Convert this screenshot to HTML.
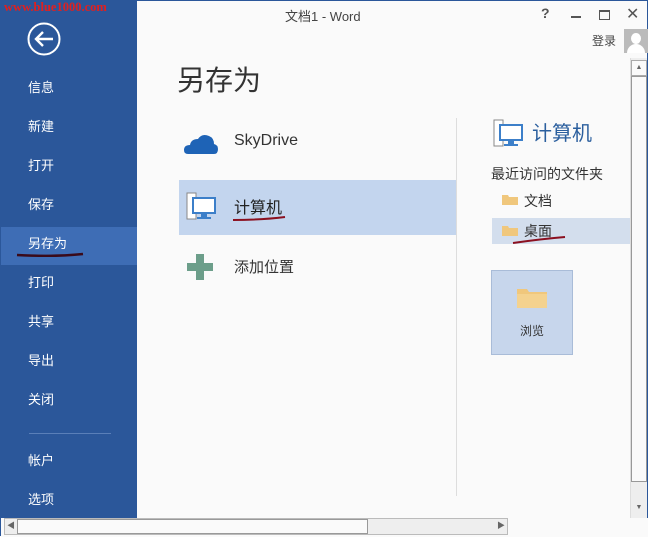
<!DOCTYPE html>
<html><head><meta charset="utf-8"><style>
*{margin:0;padding:0;box-sizing:border-box}
body{width:648px;height:536px;overflow:hidden;background:#fafafa;font-family:"Liberation Sans","Noto Sans CJK SC",sans-serif;position:relative;border:1px solid #2b579a}
.a{position:absolute}
.side{left:0;top:0;width:136px;height:517px;background:#2b579a}
.nav{position:absolute;left:27px;color:#fff;font-size:13px;line-height:16px}
.t{color:#444}
</style></head><body>
<div class="a side"></div>
<div class="a" style="left:3px;top:-1px;font-family:'Liberation Serif',serif;font-weight:bold;color:#e02020;font-size:12.5px;letter-spacing:0px">www.blue1000.com</div>
<svg class="a" style="left:25px;top:20px" width="36" height="36"><circle cx="18" cy="18" r="15.5" fill="none" stroke="#fff" stroke-width="2"/><path d="M10 18H27M17 11L10 18L17 25" fill="none" stroke="#fff" stroke-width="2.4"/></svg>
<div class="a" style="left:0;top:226px;width:136px;height:38px;background:#3e6db5"></div>
<div class="nav" style="top:79px">信息</div>
<div class="nav" style="top:118px">新建</div>
<div class="nav" style="top:157px">打开</div>
<div class="nav" style="top:196px">保存</div>
<div class="nav" style="top:235px">另存为</div>
<svg class="a" style="left:14px;top:250px" width="70" height="8"><path d="M2 4Q40 6 68 3" stroke="#3a0a1a" stroke-width="2.4" fill="none"/></svg>
<div class="nav" style="top:274px">打印</div>
<div class="nav" style="top:313px">共享</div>
<div class="nav" style="top:352px">导出</div>
<div class="nav" style="top:391px">关闭</div>
<div class="a" style="left:28px;top:432px;width:82px;height:1px;background:#5a7fb8"></div>
<div class="nav" style="top:452px">帐户</div>
<div class="nav" style="top:491px">选项</div>

<div class="a t" style="left:284px;top:5px;font-size:13px">文档1 - Word</div>
<div class="a" style="left:540px;top:4px;font-size:14px;color:#555;font-weight:bold">?</div>
<div class="a" style="left:570px;top:15px;width:10px;height:2px;background:#555"></div>
<div class="a" style="left:598px;top:9px;width:11px;height:10px;border:1px solid #555;border-top-width:2px"></div>
<div class="a" style="left:625px;top:3px;font-size:16px;color:#555">✕</div>
<div class="a t" style="left:591px;top:31px;font-size:12px">登录</div>
<div class="a" style="left:623px;top:28px;width:24px;height:24px;background:#bbb;overflow:hidden"><div class="a" style="left:7px;top:4px;width:10px;height:11px;border-radius:50%;background:#fff"></div><div class="a" style="left:3px;top:15px;width:18px;height:14px;border-radius:9px 9px 0 0;background:#fff"></div></div>

<div class="a t" style="left:176px;top:58px;font-size:28px;color:#333">另存为</div>

<svg class="a" style="left:183px;top:132px" width="34" height="22"><path d="M4 21Q0 21 0 17Q0 12 6 12Q7 6 14 6Q18 0 25 3Q30 5 30 11Q34 12 34 16Q34 21 30 21Z" fill="#1e63b6"/></svg>
<div class="a t" style="left:233px;top:131px;font-size:16px;color:#333">SkyDrive</div>
<div class="a" style="left:178px;top:179px;width:277px;height:55px;background:#c3d5ee"></div>
<svg class="a" style="left:185px;top:191px" width="32" height="30"><rect x="1" y="1" width="9" height="26" fill="#fff" stroke="#888"/><rect x="7" y="6" width="22" height="15" fill="#fff" stroke="#3c7fc9" stroke-width="2"/><rect x="15" y="22" width="6" height="3" fill="#3c7fc9"/><rect x="11" y="25" width="14" height="2" fill="#3c7fc9"/></svg>
<div class="a t" style="left:233px;top:193px;font-size:16px;color:#222">计算机</div>
<svg class="a" style="left:230px;top:214px" width="56" height="8"><path d="M2 5Q30 5 54 2" stroke="#8b1020" stroke-width="2" fill="none"/></svg>
<svg class="a" style="left:186px;top:253px" width="26" height="26"><path d="M9 0h8v9h9v8h-9v9h-8v-9h-9v-8h9z" fill="#6c9e8a"/></svg>
<div class="a t" style="left:233px;top:255px;font-size:15px;color:#333">添加位置</div>
<div class="a" style="left:455px;top:117px;width:1px;height:378px;background:#ddd"></div>

<svg class="a" style="left:492px;top:118px" width="32" height="30"><rect x="1" y="1" width="9" height="26" fill="#fff" stroke="#888"/><rect x="7" y="6" width="22" height="15" fill="#fff" stroke="#3c7fc9" stroke-width="2"/><rect x="15" y="22" width="6" height="3" fill="#3c7fc9"/><rect x="11" y="25" width="14" height="2" fill="#3c7fc9"/></svg>
<div class="a" style="left:531px;top:116px;font-size:20px;color:#2b5f9e">计算机</div>
<div class="a t" style="left:490px;top:163px;font-size:14px;color:#333">最近访问的文件夹</div>
<div class="a" style="left:491px;top:217px;width:139px;height:26px;background:#d3deed"></div>
<svg class="a" style="left:501px;top:192px" width="16" height="12"><path d="M0 2h6l1 2h9v8H0z" fill="#f0c77c"/></svg>
<div class="a t" style="left:523px;top:190px;font-size:14px;color:#333">文档</div>
<svg class="a" style="left:501px;top:223px" width="16" height="12"><path d="M0 2h6l1 2h9v8H0z" fill="#f0c77c"/></svg>
<div class="a t" style="left:523px;top:220px;font-size:14px;color:#333">桌面</div>
<svg class="a" style="left:510px;top:234px" width="56" height="10"><path d="M2 8Q30 4 54 2" stroke="#8b1020" stroke-width="2" fill="none"/></svg>
<div class="a" style="left:490px;top:269px;width:82px;height:85px;background:#c7d6ec;border:1px solid #a9bcd8"></div>
<svg class="a" style="left:516px;top:285px" width="30" height="22"><path d="M0 3h10l2 3h18v16H0z" fill="#f0c77c"/><path d="M0 8h30v14H0z" fill="#f4d28f"/></svg>
<div class="a t" style="left:519px;top:321px;font-size:12px;color:#333">浏览</div>

<div class="a" style="left:629px;top:57px;width:17px;height:460px;background:#eee;border-left:1px solid #ddd"></div>
<div class="a" style="left:630px;top:59px;width:16px;height:16px;border:1px solid #aaa;background:#fafafa;font-size:7px;text-align:center;line-height:14px;color:#666">▲</div>
<div class="a" style="left:630px;top:75px;width:16px;height:406px;border:1px solid #999;background:#fafafa"></div>
<div class="a" style="left:630px;top:500px;width:16px;height:16px;font-size:7px;text-align:center;line-height:14px;color:#666">▼</div>
<div class="a" style="left:0;top:517px;width:648px;height:19px;background:#fafafa"></div>
<div class="a" style="left:3px;top:517px;width:504px;height:17px;background:#eee;border:1px solid #bbb"></div>
<div class="a" style="left:16px;top:518px;width:351px;height:15px;border:1px solid #999;background:#fafafa"></div>
<div class="a" style="left:6px;top:519px;font-size:8px;color:#666">◀</div>
<div class="a" style="left:496px;top:519px;font-size:8px;color:#666">▶</div>
</body></html>
